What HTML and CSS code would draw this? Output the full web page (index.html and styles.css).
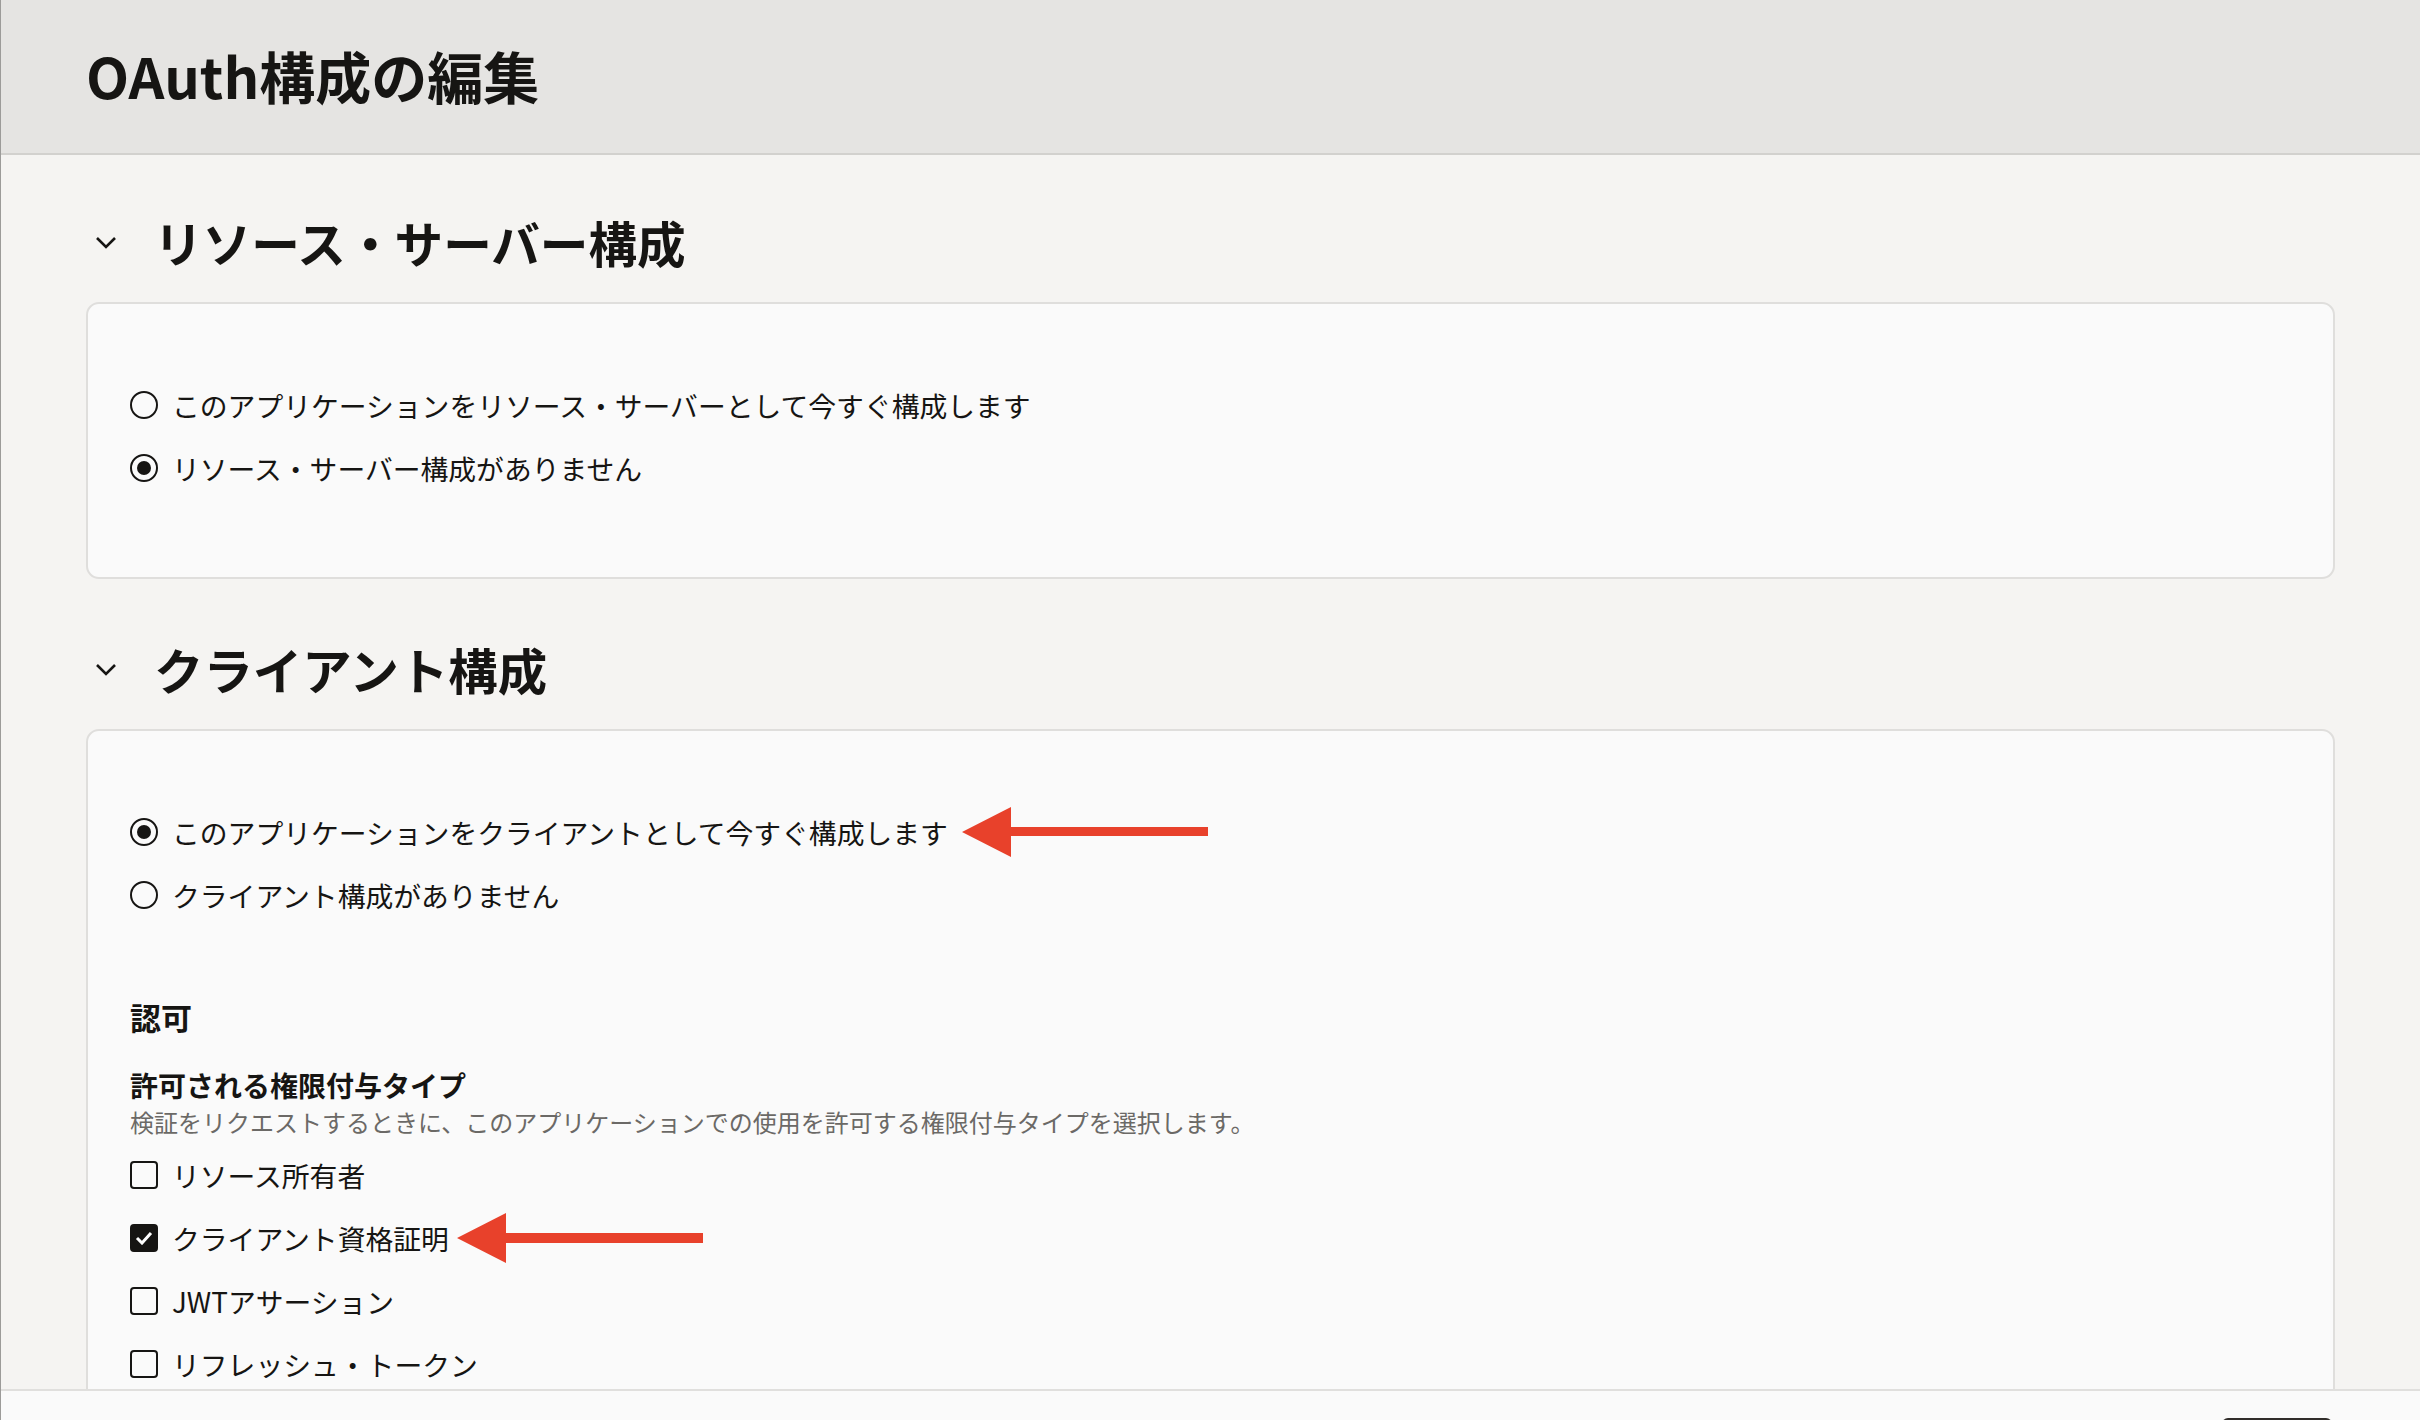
FILE: index.html
```html
<!DOCTYPE html>
<html lang="ja">
<head>
    <meta charset="UTF-8">
    <meta name="viewport" content="width=device-width, initial-scale=1.0">
    <title>OAuth構成の編集</title>
    <link rel="stylesheet" href="styles.css">
</head>
<body>
<div class="page">
    <!-- Page title bar -->
    <header class="page-header">
        <h1>OAuth構成の編集</h1>
    </header>

    <main class="page-body">
        <!-- Resource server section -->
        <section class="section">
            <div class="section-head">
                <button class="toggle" type="button" aria-expanded="true">
                    <svg width="22" height="13" viewBox="0 0 22 13"><polyline points="2,2 11,11 20,2" fill="none" stroke="#161513" stroke-width="2.6"/></svg>
                </button>
                <h2>リソース・サーバー構成</h2>
            </div>
            <div class="card">
                <label class="option">
                    <span class="radio"></span>
                    <span>このアプリケーションをリソース・サーバーとして今すぐ構成します</span>
                </label>
                <label class="option">
                    <span class="radio checked"></span>
                    <span>リソース・サーバー構成がありません</span>
                </label>
            </div>
        </section>

        <!-- Client section -->
        <section class="section">
            <div class="section-head">
                <button class="toggle" type="button" aria-expanded="true">
                    <svg width="22" height="13" viewBox="0 0 22 13"><polyline points="2,2 11,11 20,2" fill="none" stroke="#161513" stroke-width="2.6"/></svg>
                </button>
                <h2 class="wide">クライアント構成</h2>
            </div>
            <div class="card card-open">
                <label class="option">
                    <span class="radio checked"></span>
                    <span>このアプリケーションをクライアントとして今すぐ構成します</span>
                    <svg class="pointer" width="246" height="50" viewBox="0 0 246 50"><polygon points="0,25 49,0 49,20 246,20 246,29 49,29 49,50" fill="#e8412b"/></svg>
                </label>
                <label class="option">
                    <span class="radio"></span>
                    <span>クライアント構成がありません</span>
                </label>

                <h3>認可</h3>
                <h4>許可される権限付与タイプ</h4>
                <p class="hint">検証をリクエストするときに、このアプリケーションでの使用を許可する権限付与タイプを選択します。</p>

                <label class="option">
                    <span class="check"></span>
                    <span>リソース所有者</span>
                </label>
                <label class="option">
                    <span class="check checked">
                        <svg width="18" height="14" viewBox="0 0 18 14"><polyline points="2,7 7,12 16,2" fill="none" stroke="#fff" stroke-width="3"/></svg>
                    </span>
                    <span>クライアント資格証明</span>
                    <svg class="pointer tight" width="246" height="50" viewBox="0 0 246 50"><polygon points="0,25 49,0 49,20 246,20 246,30 49,30 49,50" fill="#e8412b"/></svg>
                </label>
                <label class="option">
                    <span class="check"></span>
                    <span>JWTアサーション</span>
                </label>
                <label class="option">
                    <span class="check"></span>
                    <span>リフレッシュ・トークン</span>
                </label>
            </div>
        </section>
    </main>

    <!-- Action bar -->
    <footer class="page-footer">
        <button class="primary" type="button" aria-label="保存"></button>
    </footer>
</div>
</body>
</html>
```

FILE: styles.css
```css
html, body {
    margin: 0;
    height: 100%;
}
body {
    font-family: "Noto Sans CJK JP", "Noto Sans", sans-serif;
    color: #161513;
    background-color: #f5f4f2;
    overflow: hidden;
}
.page {
    height: 100vh;
    display: grid;
    grid-template-rows: 155px 1fr 31px;
    border-left: 1px solid #9c9b99;
}

/* Title bar */
.page-header {
    display: flex;
    align-items: center;
    padding: 0 0 4px 85px;
    background-color: #e5e4e2;
    border-bottom: 2px solid #d2d1ce;
}
.page-header h1 {
    margin: 0;
    font-size: 56px;
    line-height: 64px;
    font-weight: 700;
}

.page-body {
    overflow: hidden;
    padding: 0 85px 0 85px;
}

/* Collapsible sections */
.section-head {
    display: flex;
    align-items: center;
    gap: 28px;
    height: 64px;
    margin: 55px 0 28px;
}
.section + .section .section-head {
    margin-top: 58px;
}
.toggle {
    width: 40px;
    height: 40px;
    padding: 0;
    border: none;
    background: none;
    display: flex;
    align-items: center;
    justify-content: center;
}
.section-head h2 {
    margin: 0;
    font-size: 48.6px;
    line-height: 64px;
    font-weight: 700;
}
.section-head h2.wide {
    font-size: 49.4px;
}

.card {
    background-color: #fafafa;
    border: 2px solid #dfdedc;
    border-radius: 13px;
    padding: 69px 42px 78px;
}
.card-open {
    padding-bottom: 40px;
}

/* Radio and checkbox rows */
.option {
    display: flex;
    align-items: center;
    gap: 14px;
    height: 63px;
    font-size: 27.8px;
}
.radio {
    box-sizing: border-box;
    width: 28px;
    height: 28px;
    border: 2.5px solid #161513;
    border-radius: 50%;
    display: flex;
    align-items: center;
    justify-content: center;
    flex: none;
}
.radio.checked::after {
    content: "";
    width: 14px;
    height: 14px;
    border-radius: 50%;
    background-color: #161513;
}
.check {
    box-sizing: border-box;
    width: 28px;
    height: 28px;
    border: 2.5px solid #161513;
    border-radius: 4px;
    display: flex;
    align-items: center;
    justify-content: center;
    flex: none;
}
.check.checked {
    background-color: #161513;
}
.pointer {
    margin-left: 0;
    flex: none;
}
.pointer.tight {
    margin-left: -6px;
}

.card h3 {
    margin: 71px 0 0;
    font-size: 31px;
    line-height: 40px;
    font-weight: 700;
}
.card h4 {
    margin: 28px 0 0;
    font-size: 28px;
    line-height: 40px;
    font-weight: 700;
}
.hint {
    margin: 0 0 4px;
    font-size: 24px;
    line-height: 34px;
    color: #6b6966;
}

/* Bottom action bar */
.page-footer {
    display: flex;
    justify-content: flex-end;
    align-items: flex-start;
    padding: 27px 88px 0 0;
    background-color: #fafafa;
    border-top: 2px solid #e0dfdd;
}
.primary {
    width: 110px;
    height: 48px;
    flex: none;
    border: none;
    border-radius: 6px;
    background-color: #312d2a;
}
```
